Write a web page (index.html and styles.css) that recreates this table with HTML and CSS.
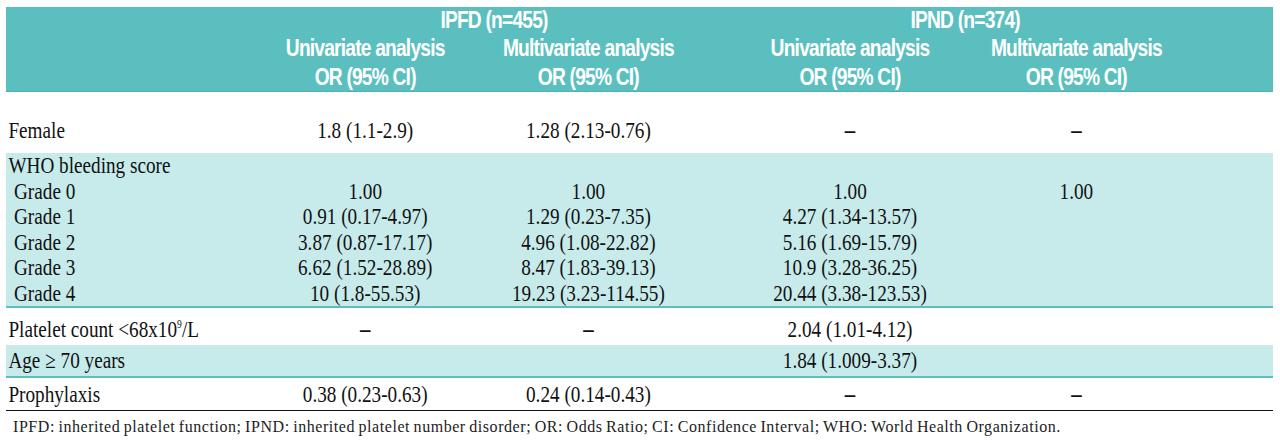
FILE: index.html
```html
<!DOCTYPE html>
<html>
<head>
<meta charset="utf-8">
<link rel="stylesheet" href="styles.css">
</head>
<body>
<div class="page">
  <div class="table">
    <div class="head">
      <div class="grp g1">IPFD (n=455)</div>
      <div class="grp g2">IPND (n=374)</div>
      <div class="sub s1"><span>Univariate analysis</span><span>OR (95% CI)</span></div>
      <div class="sub s2"><span>Multivariate analysis</span><span>OR (95% CI)</span></div>
      <div class="sub s3"><span>Univariate analysis</span><span>OR (95% CI)</span></div>
      <div class="sub s4"><span>Multivariate analysis</span><span>OR (95% CI)</span></div>
    </div>

    <div class="row female">
      <div class="lbl">Female</div><div class="v">1.8 (1.1-2.9)</div><div class="v">1.28 (2.13-0.76)</div><div class="v dash">–</div><div class="v dash">–</div>
    </div>

    <div class="block shade">
      <div class="row line"><div class="lbl">WHO bleeding score</div></div>
      <div class="row line"><div class="lbl ind">Grade 0</div><div class="v">1.00</div><div class="v">1.00</div><div class="v">1.00</div><div class="v">1.00</div></div>
      <div class="row line"><div class="lbl ind">Grade 1</div><div class="v">0.91 (0.17-4.97)</div><div class="v">1.29 (0.23-7.35)</div><div class="v">4.27 (1.34-13.57)</div><div class="v"></div></div>
      <div class="row line"><div class="lbl ind">Grade 2</div><div class="v">3.87 (0.87-17.17)</div><div class="v">4.96 (1.08-22.82)</div><div class="v">5.16 (1.69-15.79)</div><div class="v"></div></div>
      <div class="row line"><div class="lbl ind">Grade 3</div><div class="v">6.62 (1.52-28.89)</div><div class="v">8.47 (1.83-39.13)</div><div class="v">10.9 (3.28-36.25)</div><div class="v"></div></div>
      <div class="row line"><div class="lbl ind">Grade 4</div><div class="v">10 (1.8-55.53)</div><div class="v">19.23 (3.23-114.55)</div><div class="v">20.44 (3.38-123.53)</div><div class="v"></div></div>
    </div>

    <div class="row platelet">
      <div class="lbl">Platelet count &lt;68x10<sup>9</sup>/L</div><div class="v dash">–</div><div class="v dash">–</div><div class="v">2.04 (1.01-4.12)</div><div class="v"></div>
    </div>

    <div class="row age shade">
      <div class="lbl">Age ≥ 70 years</div><div class="v"></div><div class="v"></div><div class="v">1.84 (1.009-3.37)</div><div class="v"></div>
    </div>

    <div class="row proph">
      <div class="lbl">Prophylaxis</div><div class="v">0.38 (0.23-0.63)</div><div class="v">0.24 (0.14-0.43)</div><div class="v dash">–</div><div class="v dash">–</div>
    </div>
  </div>
  <p class="note">IPFD: inherited platelet function; IPND: inherited platelet number disorder; OR: Odds Ratio; CI: Confidence Interval; WHO: World Health Organization.</p>
</div>
</body>
</html>
```

FILE: styles.css
```css
html, body {
  margin: 0;
  padding: 0;
  background: #ffffff;
}

.page {
  width: 1267px;
  padding: 7px 0 0 6px;
  overflow: hidden;
}

.table {
  width: 1584px;
  transform: scaleX(0.8);
  transform-origin: 0 0;
  font-family: "Liberation Serif", "Times New Roman", serif;
  font-size: 24px;
  color: #111111;
}

.head,
.row {
  display: grid;
  grid-template-columns: 308px 282px 276px 378px 188px 1fr;
}

.head {
  height: 85px;
  box-sizing: border-box;
  background: #5cbfbf;
  border-bottom: 1px solid #4fb1b1;
  padding-top: 1px;
  font-family: "Liberation Sans", Arial, sans-serif;
  font-weight: bold;
  font-size: 24px;
  letter-spacing: -1px;
  color: #ffffff;
  grid-template-rows: 23px auto;
  row-gap: 4px;
}

.grp {
  display: flex;
  justify-content: center;
  white-space: nowrap;
  line-height: 23px;
  grid-row: 1;
}

.g1 { grid-column: 2 / 4; padding-left: 46px; }
.g2 { grid-column: 4 / 6; padding-left: 100px; }

.sub {
  grid-row: 2;
  display: flex;
  flex-direction: column;
  align-items: center;
  gap: 4px;
  white-space: nowrap;
  line-height: 25px;
}

.s1 { grid-column: 2; }
.s2 { grid-column: 3; }
.s3 { grid-column: 4; }
.s4 { grid-column: 5; }

.lbl {
  grid-column: 1;
  padding-left: 3px;
  white-space: nowrap;
}

.lbl.ind {
  padding-left: 10px;
}

.v {
  display: flex;
  justify-content: center;
  white-space: nowrap;
}

.v.dash {
  font-weight: bold;
  font-size: 26px;
}

.row {
  line-height: 26px;
}

.female {
  padding: 25px 0 10px;
}

.shade {
  background: #c7ebeb;
}

.block {
  border-bottom: 2px solid #5cbfbf;
}

.block .line {
  line-height: 25.5px;
}

.platelet {
  padding: 8px 0 3px;
}

.platelet sup {
  font-size: 12px;
  line-height: 0;
  vertical-align: 9px;
}

.age {
  padding: 2px 0 3px;
  border-bottom: 2px solid #5cbfbf;
}

.proph {
  padding: 3px 0 3px;
  border-bottom: 1px solid #111111;
}

.note {
  margin: 6px 0 0 7px;
  font-family: "Liberation Serif", "Times New Roman", serif;
  font-size: 16px;
  letter-spacing: 0.55px;
  word-spacing: -1px;
  line-height: 20px;
  color: #222222;
  white-space: nowrap;
}
```
